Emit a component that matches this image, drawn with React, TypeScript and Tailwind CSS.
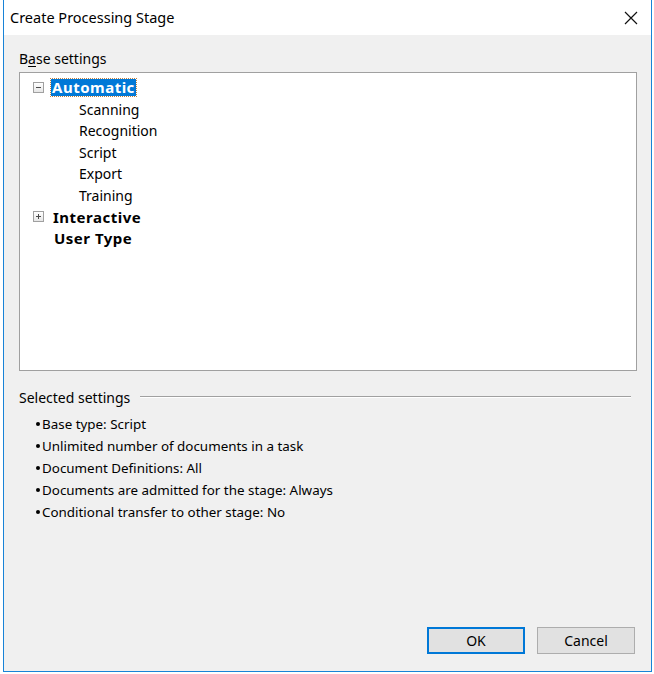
import React from "react";

const font = { fontFamily: '"Noto Sans", "Open Sans", sans-serif' };

function Expander({ open }: { open: boolean }) {
  return (
    <div className="w-[11px] h-[11px] border border-[#a0a0a0] bg-gradient-to-b from-white to-[#e6e6e6] flex items-center justify-center relative">
      <div className="w-[5px] h-[1px] bg-[#4a4a4a]" />
      {!open && <div className="absolute w-[1px] h-[5px] bg-[#4a4a4a]" />}
    </div>
  );
}

export default function App() {
  const children = ["Scanning", "Recognition", "Script", "Export", "Training"];
  const bullets = [
    "Base type: Script",
    "Unlimited number of documents in a task",
    "Document Definitions: All",
    "Documents are admitted for the stage: Always",
    "Conditional transfer to other stage: No",
  ];
  return (
    <div className="w-[654px] h-[674px] bg-white pl-[3px] pr-[2px] pb-[2px]" style={font}>
      <div className="w-full h-full border border-t-0 border-[#1883d7] flex flex-col text-[14px] text-black">
        <div className="h-[35px] bg-white flex items-center justify-between pl-[6px] pr-[12px] shrink-0">
          <span className="text-[14.5px]">Create Processing Stage</span>
          <svg width="14" height="14" viewBox="0 0 14 14" className="mr-[1px]">
            <path d="M1 1 L13 13 M13 1 L1 13" stroke="#111" strokeWidth="1.2" />
          </svg>
        </div>
        <div className="flex-1 bg-[#f0f0f0] flex flex-col px-[15px]">
          <div className="mt-[14px] h-[20px] leading-[20px]">
            B<span className="underline underline-offset-2">a</span>se settings
          </div>
          <div className="mt-[3px] h-[299px] bg-white border border-[#a0a0a0] pt-[4px] pl-[13px] w-[618px]">
            <div className="flex items-center h-[21.5px]">
              <Expander open />
              <span className="ml-[7px] px-[1px] bg-[#0078d7] text-white font-bold text-[15px] tracking-[0.5px] leading-[17px] outline outline-1 outline-dotted outline-[#c08040]">
                Automatic
              </span>
            </div>
            {children.map((c) => (
              <div key={c} className="h-[21.5px] flex items-center pl-[46px]">
                {c}
              </div>
            ))}
            <div className="flex items-center h-[21.5px]">
              <Expander open={false} />
              <span className="ml-[9px] font-bold text-[15px] tracking-[0.5px]">Interactive</span>
            </div>
            <div className="flex items-center h-[21.5px] pl-[21px]">
              <span className="font-bold text-[15px] tracking-[0.5px]">User Type</span>
            </div>
          </div>
          <div className="mt-[16px] flex items-center h-[20px]">
            <span>Selected settings</span>
            <div className="flex-1 ml-[10px] mr-[5px] h-[2px] border-t border-[#a0a0a0] border-b border-b-white" />
          </div>
          <div className="mt-[6px] pl-[17px] text-[13.4px]">
            {bullets.map((b) => (
              <div key={b} className="h-[22px] flex items-center">
                <span className="w-[4px] h-[4px] rounded-full bg-black mr-[2px]" />
                <span>{b}</span>
              </div>
            ))}
          </div>
          <div className="flex-1" />
          <div className="flex justify-end gap-[12px] pb-[17px] pr-[1px]">
            <button className="w-[98px] h-[27px] bg-[#e1e1e1] border-2 border-[#0078d7] text-[14px]">OK</button>
            <button className="w-[98px] h-[27px] bg-[#e1e1e1] border border-[#adadad] text-[14px]">Cancel</button>
          </div>
        </div>
      </div>
    </div>
  );
}
